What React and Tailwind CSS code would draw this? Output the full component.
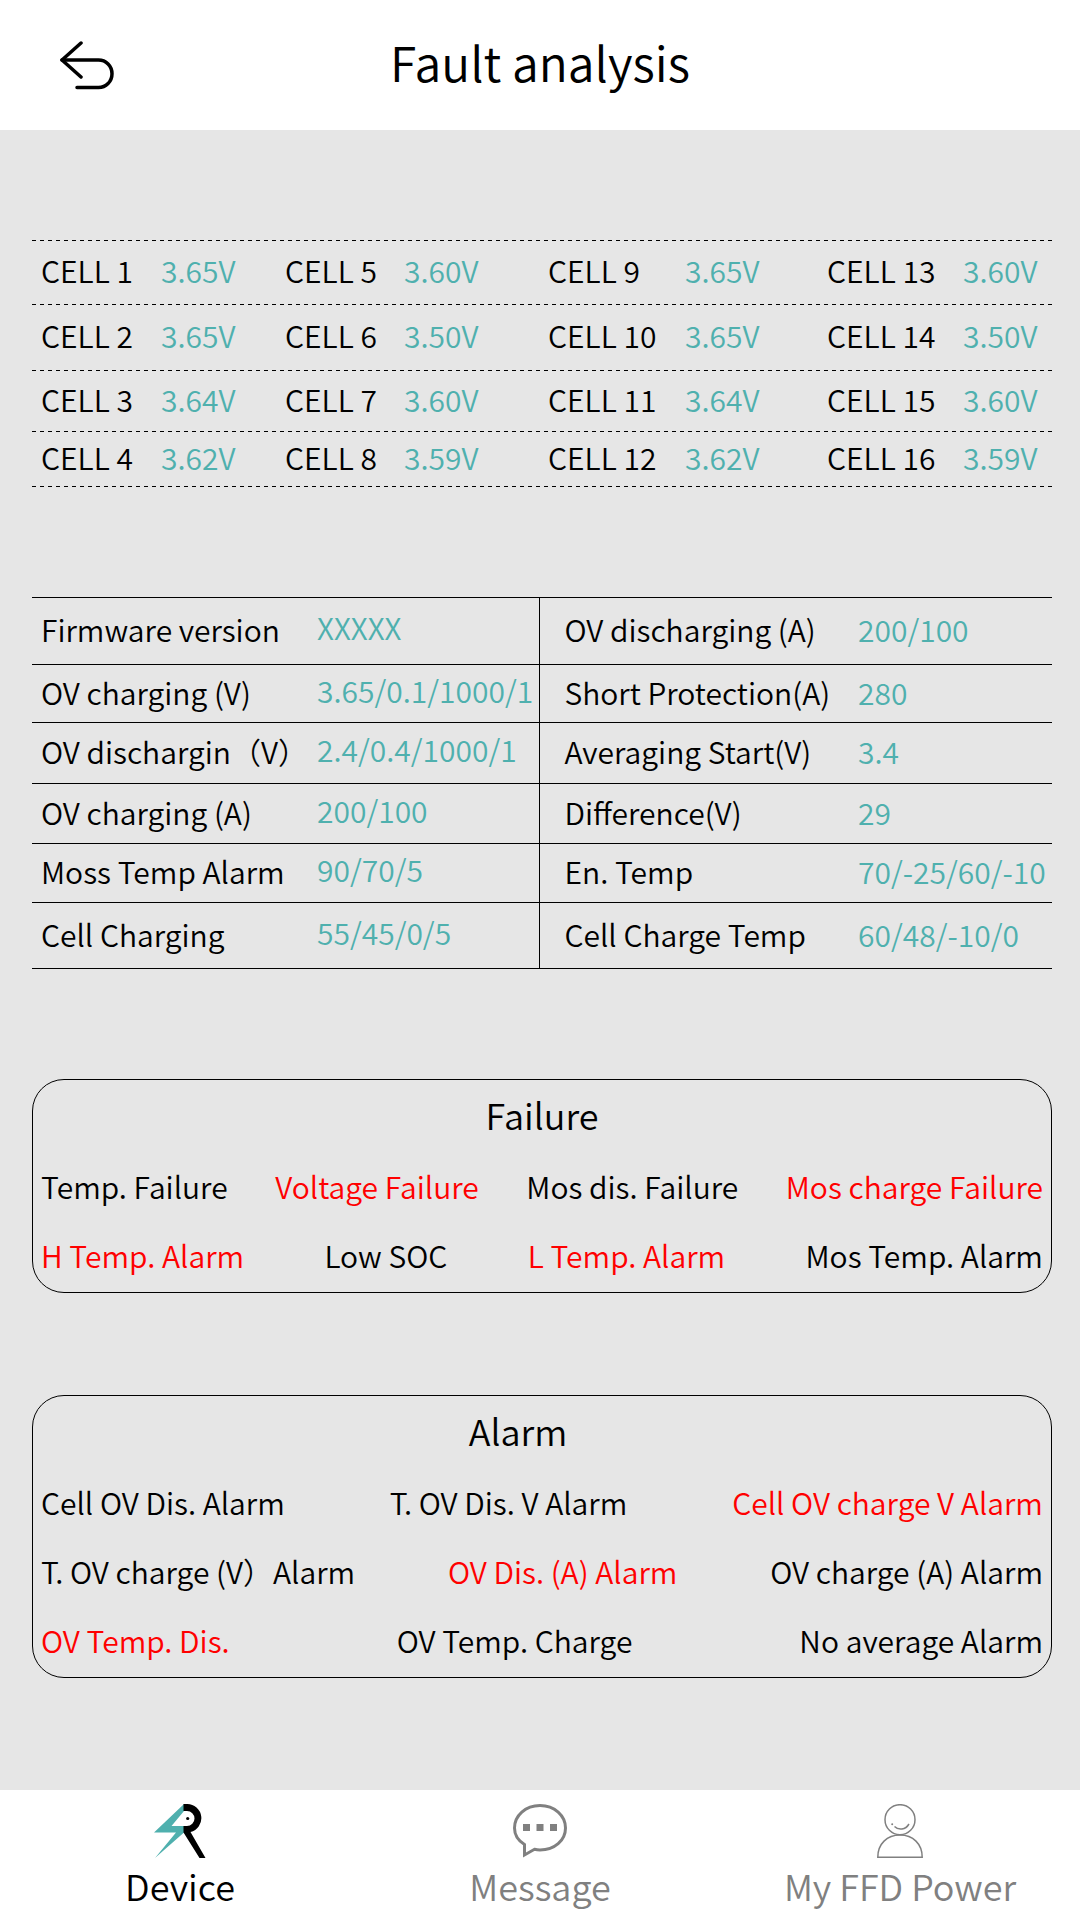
import { useState } from 'react';
import clsx from 'clsx';

const cellRows = [
  { height: 'h-[65px]', cells: [['CELL 1', '3.65V'], ['CELL 5', '3.60V'], ['CELL 9', '3.65V'], ['CELL 13', '3.60V']] },
  { height: 'h-[66px]', cells: [['CELL 2', '3.65V'], ['CELL 6', '3.50V'], ['CELL 10', '3.65V'], ['CELL 14', '3.50V']] },
  { height: 'h-[61px]', cells: [['CELL 3', '3.64V'], ['CELL 7', '3.60V'], ['CELL 11', '3.64V'], ['CELL 15', '3.60V']] },
  { height: 'h-[55px]', cells: [['CELL 4', '3.62V'], ['CELL 8', '3.59V'], ['CELL 12', '3.62V'], ['CELL 16', '3.59V']] },
];

const cellColumns = ['w-[129px]', 'w-[124px]', 'w-[119px]', 'w-[144px]', 'w-[137px]', 'w-[142px]', 'w-[136px]', 'w-[89px]'];

const settings = [
  { height: 'h-[67px]', left: ['Firmware version', 'XXXXX'], right: ['OV discharging (A)', '200/100'] },
  { height: 'h-[58px]', left: ['OV charging (V)', '3.65/0.1/1000/1'], right: ['Short Protection(A)', '280'] },
  { height: 'h-[61px]', left: ['OV dischargin（V）', '2.4/0.4/1000/1'], right: ['Averaging Start(V)', '3.4'] },
  { height: 'h-[60px]', left: ['OV charging (A)', '200/100'], right: ['Difference(V)', '29'] },
  { height: 'h-[59px]', left: ['Moss Temp Alarm', '90/70/5'], right: ['En. Temp', '70/-25/60/-10'] },
  { height: 'h-[66px]', left: ['Cell Charging', '55/45/0/5'], right: ['Cell Charge Temp', '60/48/-10/0'] },
];

const failures = [
  [{ text: 'Temp. Failure' }, { text: 'Voltage Failure', active: true }, { text: 'Mos dis. Failure' }, { text: 'Mos charge Failure', active: true }],
  [{ text: 'H Temp. Alarm', active: true }, { text: 'Low SOC' }, { text: 'L Temp. Alarm', active: true }, { text: 'Mos Temp. Alarm' }],
];

const alarms = [
  [{ text: 'Cell OV Dis. Alarm' }, { text: 'T. OV Dis. V Alarm' }, { text: 'Cell OV charge V Alarm', active: true }],
  [{ text: 'T. OV charge (V）Alarm' }, { text: 'OV Dis. (A) Alarm', active: true }, { text: 'OV charge (A) Alarm' }],
  [{ text: 'OV Temp. Dis.', active: true }, { text: 'OV Temp. Charge' }, { text: 'No average Alarm' }],
];

const BackIcon = () => (
  <svg width="54" height="50" viewBox="0 0 54 50" fill="none" stroke="currentColor" strokeWidth="3.5" strokeLinecap="round" strokeLinejoin="round">
    <path d="M21 3 L2 20 L21 37" />
    <path d="M2 20 H38.5 C46 20 52 26 52 33.7 C52 41.5 46 47.5 38.5 47.5 H17" />
  </svg>
);

const DeviceIcon = () => (
  <svg width="52" height="54" viewBox="0 0 52 54">
    <path d="M30 0 V7 L17.5 22 H30 V28.5 L1 54 L22 28.5 H0 Z" fill="#4fb0ae" />
    <path d="M29.5 0 H33 A14.2 14.2 0 0 1 36.5 28 L51.5 54 H45.5 L29.5 28.5 V22 H33 A7.5 7.5 0 0 0 33 7 H29.5 Z" fill="#000" />
    <circle cx="33.7" cy="14.5" r="1.6" fill="#000" />
  </svg>
);

const MessageIcon = () => (
  <svg width="54" height="54" viewBox="0 0 54 54" fill="none">
    <path d="M11.5 40.5 C5 36.5 1.5 30.5 1.5 24 C1.5 11.5 12.5 1.5 27 1.5 C41.5 1.5 52.5 11.5 52.5 24 C52.5 36.5 41.5 46 27 46 C25 46 23 45.7 21.5 45.3 L11.5 51 Z" stroke="currentColor" strokeWidth="3" />
    <path d="M10 20h7v7h-7z M23.5 20h7v7h-7z M37 20h7v7h-7z" fill="currentColor" />
  </svg>
);

const UserIcon = () => (
  <svg width="46" height="54" viewBox="0 0 46 54" fill="none" stroke="currentColor" strokeWidth="1.5">
    <circle cx="23" cy="15.7" r="15" />
    <path d="M0.8 53.2 C0.8 40 10 31 23 31 C36 31 45.2 40 45.2 53.2 Z" />
    <path d="M17.5 22.5 C21.5 26.5 28.5 26 32 20" />
    <circle cx="15.2" cy="20.3" r="1" fill="currentColor" stroke="none" />
  </svg>
);

const tabs = [
  { id: 'device', label: 'Device', Icon: DeviceIcon },
  { id: 'message', label: 'Message', Icon: MessageIcon },
  { id: 'power', label: 'My FFD Power', Icon: UserIcon },
];

function StatusCard({ title, rows, titleClass }) {
  return (
    <section className="border border-black rounded-4xl px-2 pt-2 pb-[2px]">
      <h2 className={clsx('text-4xl leading-[52px] text-center mb-3', titleClass)}>{title}</h2>
      {rows.map((row, i) => (
        <ul key={i} className="flex justify-between leading-[69px] whitespace-nowrap">
          {row.map((item) => (
            <li key={item.text} className={item.active ? 'text-[#ff0000]' : ''}>{item.text}</li>
          ))}
        </ul>
      ))}
    </section>
  );
}

export default function App() {
  const [activeTab, setActiveTab] = useState('device');

  return (
    <div className="min-h-screen flex flex-col bg-[#e6e6e6] text-black font-[350] text-[30px] leading-[44px] font-['Noto_Sans_CJK_SC',sans-serif]">
      {/* Header */}
      <header className="bg-white h-[130px] grid grid-cols-[1fr_auto_1fr] items-center px-[60px]">
        <button aria-label="Back" className="justify-self-start">
          <BackIcon />
        </button>
        <h1 className="text-5xl leading-[72px] pb-2">Fault analysis</h1>
      </header>

      <main className="grow pl-8 pr-7 pt-[110px]">
        {/* Cell voltages */}
        <table className="w-full table-fixed whitespace-nowrap bg-[repeating-linear-gradient(90deg,#000_0_4px,transparent_4px_8px)] bg-[length:100%_1px] bg-top bg-no-repeat">
          <colgroup>
            {cellColumns.map((width, i) => (
              <col key={i} className={width} />
            ))}
          </colgroup>
          <tbody>
            {cellRows.map(({ height, cells }) => (
              <tr
                key={cells[0][0]}
                className={clsx(height, 'bg-[repeating-linear-gradient(90deg,#000_0_4px,transparent_4px_8px)] bg-[length:100%_1px] bg-bottom bg-no-repeat')}
              >
                {cells.map(([name, value]) => [
                  <td key={name} className="p-0 pb-[6px] first:pl-[9px]">{name}</td>,
                  <td key={name + 'v'} className="p-0 pb-[6px] text-[#4fb0ae]">{value}</td>,
                ])}
              </tr>
            ))}
          </tbody>
        </table>

        {/* Protection settings */}
        <table className="w-full table-fixed whitespace-nowrap mt-[110px] border-collapse border-y border-black">
          <colgroup>
            <col className="w-[285px]" />
            <col className="w-[222px]" />
            <col className="w-[319px]" />
            <col className="w-[194px]" />
          </colgroup>
          <tbody>
            {settings.map(({ height, left, right }) => (
              <tr key={left[0]} className={clsx(height, 'border-b border-black')}>
                <td className="p-0 pl-[9px] pb-1">{left[0]}</td>
                <td className="p-0 pb-2 border-r border-black text-[#4fb0ae]">{left[1]}</td>
                <td className="p-0 pl-[25px] pb-1">{right[0]}</td>
                <td className="p-0 pb-1 text-[#4fb0ae]">{right[1]}</td>
              </tr>
            ))}
          </tbody>
        </table>

        <div className="mt-[110px] flex flex-col gap-[102px]">
          <StatusCard title="Failure" rows={failures} />
          <StatusCard title="Alarm" rows={alarms} titleClass="pr-12" />
        </div>
      </main>

      {/* Bottom navigation */}
      <nav className="bg-white h-[130px] grid grid-cols-3">
        {tabs.map(({ id, label, Icon }) => (
          <button
            key={id}
            onClick={() => setActiveTab(id)}
            className={clsx('flex flex-col items-center gap-px pt-[14px] text-4xl leading-[52px] whitespace-nowrap', activeTab === id ? 'text-black' : 'text-[#808080]')}
          >
            <Icon />
            <span>{label}</span>
          </button>
        ))}
      </nav>
    </div>
  );
}
